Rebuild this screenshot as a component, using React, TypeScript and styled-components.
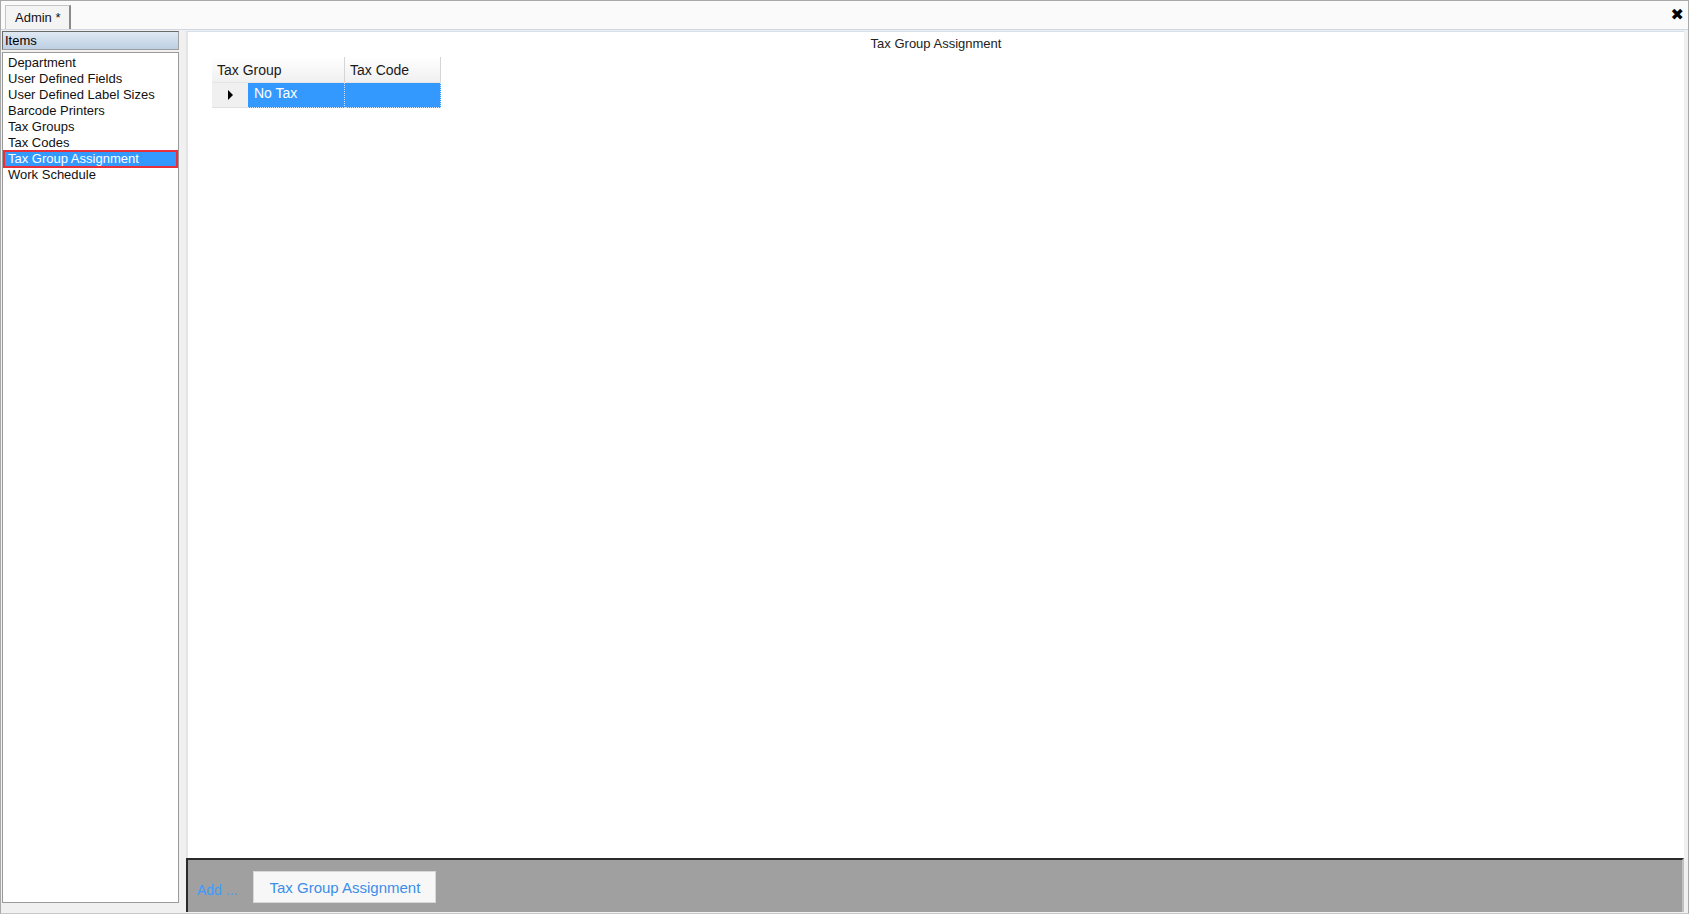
import React from "react";
import styled, { createGlobalStyle } from "styled-components";

const GlobalStyle = createGlobalStyle`
  html, body {
    margin: 0;
    padding: 0;
    background: #f0f0f0;
  }
  body {
    font-family: "Liberation Sans", Arial, sans-serif;
    font-size: 13px;
    color: #000;
  }
`;

const Window = styled.div`
  width: 1689px;
  height: 914px;
  box-sizing: border-box;
  border: 1px solid #a8a8a8;
  border-bottom-color: #c8c8c8;
  background: #f0f0f0;
  display: flex;
  flex-direction: column;
`;

const TabBar = styled.div`
  height: 29px;
  flex: none;
  box-sizing: border-box;
  background: #fafafa;
  border-bottom: 1px solid #cfd8e2;
  display: flex;
  align-items: flex-end;
  padding-left: 4px;
  padding-right: 4px;
`;

const Tab = styled.div`
  height: 24px;
  box-sizing: border-box;
  padding: 0 8px 0 9px;
  background: #f4f4f4;
  border: 1px solid #c4c4c4;
  border-right: 2px solid #8a8a8a;
  border-bottom: none;
  display: flex;
  align-items: center;
  font-size: 13px;
  color: #111;
`;

const Close = styled.div`
  margin-left: auto;
  align-self: center;
  font-size: 16px;
  font-weight: bold;
  line-height: 1;
  margin-top: -1px;
  font-family: "DejaVu Sans", sans-serif;
`;

const Body = styled.div`
  flex: 1;
  display: flex;
  padding: 1px 4px 0 1px;
  min-height: 0;
`;

const Sidebar = styled.div`
  width: 177px;
  display: flex;
  flex-direction: column;
  gap: 2px;
  margin-bottom: 10px;
`;

const ItemsHeader = styled.div`
  height: 19px;
  box-sizing: border-box;
  border: 1px solid #a0a0a0;
  border-top-color: #6a6a6a;
  border-left-color: #6a6a6a;
  background: linear-gradient(#dfe9f3, #bccfe2);
  padding-left: 2px;
  display: flex;
  align-items: center;
  font-size: 13px;
`;

const ListBox = styled.ul`
  flex: 1;
  margin: 0;
  padding: 2px 1px;
  list-style: none;
  background: #fff;
  border: 1px solid #9a9a9a;
`;

const ListItem = styled.li<{ $selected?: boolean }>`
  height: 16px;
  line-height: 15px;
  padding-left: 4px;
  box-sizing: border-box;
  font-size: 13px;
  color: ${(p) => (p.$selected ? "#fff" : "#111")};
  background: ${(p) => (p.$selected ? "#3399ff" : "transparent")};
  outline: ${(p) => (p.$selected ? "2px solid #e8303a" : "none")};
  outline-offset: -1px;
`;

const Main = styled.div`
  flex: 1;
  margin-left: 7px;
  display: flex;
  flex-direction: column;
  border-top: 1px solid #d6e0ea;
  margin-bottom: 1px;
`;

const Content = styled.div`
  flex: 1;
  background: #fff;
  border-left: 2px solid #e4e4e4;
  display: flex;
  flex-direction: column;
  padding: 4px 0 0 24px;
`;

const Title = styled.div`
  text-align: center;
  font-size: 13px;
  color: #222;
  height: 21px;
  padding-right: 24px;
`;

const Grid = styled.div`
  display: grid;
  grid-template-columns: 36px 97px 96px;
  width: 229px;
`;

const HeaderCell = styled.div<{ $span?: number }>`
  grid-column: span ${(p) => p.$span ?? 1};
  height: 26px;
  box-sizing: border-box;
  background: linear-gradient(#ffffff, #f0f0f0);
  border-right: 1px solid #d5d5d5;
  border-bottom: 1px solid #e6e6e6;
  display: flex;
  align-items: center;
  padding-left: 5px;
  font-size: 14px;
  color: #1a1a1a;
`;

const RowHeader = styled.div`
  height: 25px;
  box-sizing: border-box;
  background: #f0f0f0;
  border-bottom: 1px solid #e0e0e0;
  display: flex;
  align-items: center;
  justify-content: center;
`;

const Cell = styled.div`
  height: 25px;
  box-sizing: border-box;
  background: #3399ff;
  color: #fff;
  font-size: 14px;
  padding-left: 6px;
  display: flex;
  align-items: center;
  border-right: 1px dotted #cfe3f7;
  border-bottom: 1px dotted #cfe3f7;
  padding-bottom: 4px;
`;

const BottomBar = styled.div`
  height: 54px;
  flex: none;
  box-sizing: border-box;
  background: #a0a0a0;
  border-top: 2px solid #2a2a2a;
  border-left: 2px solid #2a2a2a;
  border-right: 2px solid #c0c0c0;
  display: flex;
  align-items: center;
  padding: 2px 0 0 9px;
  gap: 16px;
`;

const AddLink = styled.span`
  color: #3d9bff;
  font-size: 14px;
  margin-top: 6px;
`;

const ActionButton = styled.button`
  height: 32px;
  padding: 0 15px;
  background: #f7f7f7;
  border: 1px solid #d8d8d8;
  color: #3b8ee8;
  font-family: "Liberation Sans", Arial, sans-serif;
  font-size: 15px;
`;

const items = [
  "Department",
  "User Defined Fields",
  "User Defined Label Sizes",
  "Barcode Printers",
  "Tax Groups",
  "Tax Codes",
  "Tax Group Assignment",
  "Work Schedule",
];

export default function App() {
  return (
    <>
      <GlobalStyle />
      <Window>
        <TabBar>
          <Tab>Admin *</Tab>
          <Close>✖</Close>
        </TabBar>
        <Body>
          <Sidebar>
            <ItemsHeader>Items</ItemsHeader>
            <ListBox>
              {items.map((it) => (
                <ListItem key={it} $selected={it === "Tax Group Assignment"}>
                  {it}
                </ListItem>
              ))}
            </ListBox>
          </Sidebar>
          <Main>
            <Content>
              <Title>Tax Group Assignment</Title>
              <Grid>
                <HeaderCell $span={2}>Tax Group</HeaderCell>
                <HeaderCell>Tax Code</HeaderCell>
                <RowHeader>
                  <svg width="7" height="10" viewBox="0 0 7 10">
                    <path d="M1 0 L6 5 L1 10 Z" fill="#000" />
                  </svg>
                </RowHeader>
                <Cell>No Tax</Cell>
                <Cell />
              </Grid>
            </Content>
            <BottomBar>
              <AddLink>Add ...</AddLink>
              <ActionButton>Tax Group Assignment</ActionButton>
            </BottomBar>
          </Main>
        </Body>
      </Window>
    </>
  );
}
